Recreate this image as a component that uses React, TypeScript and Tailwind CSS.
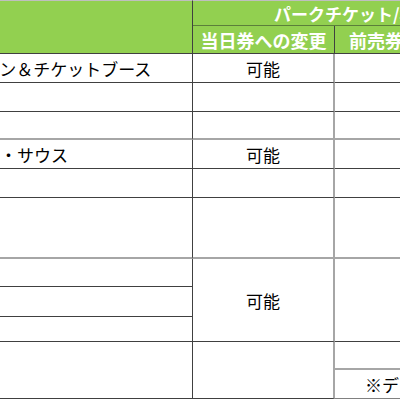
import React from "react";

const FONT = { fontFamily: '"Noto Sans CJK JP", "Noto Sans", sans-serif' };

// one body cell: bottom + right rule, colours taken per line
function Cell({
  children,
  className = "",
}: {
  children?: React.ReactNode;
  className?: string;
}) {
  return (
    <div
      className={`flex items-center overflow-hidden whitespace-nowrap text-[17px] leading-none text-black ${className}`}
    >
      {children}
    </div>
  );
}

const C1 = "border-r border-r-[#404040] pl-[4px]";
const C2 = "border-r-2 border-r-[#a6a6a6] justify-center";
const C3 = "";

export default function App() {
  return (
    <div className="w-[400px] h-[400px] overflow-hidden bg-white" style={FONT}>
      <div className="-ml-[140px] grid w-[629px] grid-cols-[333px_142px_154px] grid-rows-[26px_28px_29px_29px_28px_29px_29px_61px_28px_30px_25px_28px_29px]">
        {/* header */}
        <div className="row-span-2 bg-[#92d050] border-t border-t-[#bfbfbf] border-r border-r-[#404040] border-b border-b-[#404040]" />
        <div className="col-span-2 flex items-center bg-[#92d050] border-t border-t-[#bfbfbf] border-b border-b-[#5b7f3a] pl-[81px] overflow-hidden whitespace-nowrap text-[17px] font-bold leading-none text-white">
          パークチケット/年間パスポート
        </div>
        <div className="flex items-center justify-center bg-[#92d050] border-r border-r-[#404040] border-b border-b-[#404040] text-[18px] font-bold leading-none text-white whitespace-nowrap">
          当日券への変更
        </div>
        <div className="flex items-center justify-center bg-[#92d050] border-b border-b-[#404040] text-[18px] font-bold leading-none text-white whitespace-nowrap">
          前売券への変更
        </div>

        {/* 54-83 */}
        <Cell className={`${C1} border-b border-b-[#404040]`}>インフォメーション＆チケットブース</Cell>
        <Cell className={`${C2} border-b border-b-[#404040]`}>可能</Cell>
        <Cell className={`${C3} border-b border-b-[#404040]`} />

        {/* 83-112 */}
        <Cell className={`${C1} border-b border-b-[#404040]`} />
        <Cell className={`${C2} border-b border-b-[#404040]`} />
        <Cell className={`${C3} border-b border-b-[#404040]`} />

        {/* 112-140 */}
        <Cell className={`${C1} border-b-2 border-b-[#a6a6a6]`} />
        <Cell className={`${C2} border-b-2 border-b-[#a6a6a6]`} />
        <Cell className={`${C3} border-b-2 border-b-[#a6a6a6]`} />

        {/* 140-169 */}
        <Cell className={`${C1} border-b border-b-[#404040]`}>チケットセンター・サウス</Cell>
        <Cell className={`${C2} border-b border-b-[#404040]`}>可能</Cell>
        <Cell className={`${C3} border-b border-b-[#404040]`} />

        {/* 169-198 */}
        <Cell className={`${C1} border-b border-b-[#404040]`} />
        <Cell className={`${C2} border-b border-b-[#404040]`} />
        <Cell className={`${C3} border-b border-b-[#404040]`} />

        {/* 198-259 */}
        <Cell className={`${C1} border-b-2 border-b-[#a6a6a6]`} />
        <Cell className={`${C2} border-b-2 border-b-[#a6a6a6]`} />
        <Cell className={`${C3} border-b-2 border-b-[#a6a6a6]`} />

        {/* 259-342 */}
        <Cell className={`${C1} border-b border-b-[#404040]`} />
        <Cell className={`${C2} row-span-3 border-b border-b-[#404040]`}>可能</Cell>
        <Cell className={`${C3} row-span-3 border-b border-b-[#404040]`} />
        <Cell className={`${C1} border-b border-b-[#404040]`} />
        <Cell className={`${C1} border-b border-b-[#404040]`} />

        {/* 342-399 */}
        <Cell className={`${C1} row-span-2 border-b border-b-[#404040]`} />
        <Cell className={`${C2} row-span-2 border-b border-b-[#404040]`} />
        <Cell className={`${C3} border-b-2 border-b-[#a6a6a6]`} />
        <Cell className={`${C3} pl-[30px] border-b border-b-[#808080]`}>※データ引き継ぎ</Cell>
      </div>
    </div>
  );
}
